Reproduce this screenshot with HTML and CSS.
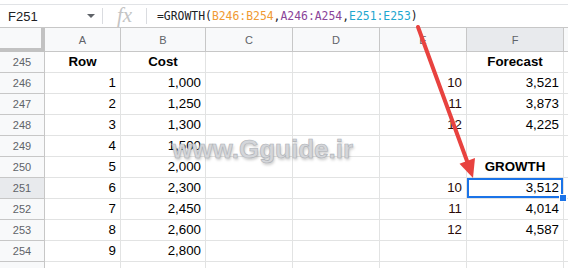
FILE: index.html
```html
<!DOCTYPE html>
<html lang="en">
<head>
    <meta charset="UTF-8">
    <title>GROWTH - Sheet</title>
    <link rel="stylesheet" href="styles.css">
</head>
<body>

<div class="top-strip"></div>

<!-- Formula bar -->
<div class="formula-bar">
    <div class="name-box">
        <span class="cell-ref">F251</span>
        <span class="caret"></span>
    </div>
    <div class="fx-box"><span class="fx">fx</span></div>
    <div class="formula">=GROWTH(<span class="r1">B246:B254</span>,<span class="r2">A246:A254</span>,<span class="r3">E251:E253</span>)</div>
</div>

<!-- Grid -->
<div class="sheet">
    <div class="corner"></div>
    <div class="col-head">A</div>
    <div class="col-head">B</div>
    <div class="col-head">C</div>
    <div class="col-head">D</div>
    <div class="col-head">E</div>
    <div class="col-head active">F</div>
    <div class="col-head"></div>

    <div class="row-head">245</div>
    <div class="cell title">Row</div>
    <div class="cell title">Cost</div>
    <div class="cell"></div>
    <div class="cell"></div>
    <div class="cell"></div>
    <div class="cell title">Forecast</div>
    <div class="cell"></div>

    <div class="row-head">246</div>
    <div class="cell num">1</div>
    <div class="cell num">1,000</div>
    <div class="cell"></div>
    <div class="cell"></div>
    <div class="cell num dark">10</div>
    <div class="cell num">3,521</div>
    <div class="cell"></div>

    <div class="row-head">247</div>
    <div class="cell num">2</div>
    <div class="cell num">1,250</div>
    <div class="cell"></div>
    <div class="cell"></div>
    <div class="cell num dark">11</div>
    <div class="cell num">3,873</div>
    <div class="cell"></div>

    <div class="row-head">248</div>
    <div class="cell num">3</div>
    <div class="cell num">1,300</div>
    <div class="cell"></div>
    <div class="cell"></div>
    <div class="cell num dark">12</div>
    <div class="cell num">4,225</div>
    <div class="cell"></div>

    <div class="row-head">249</div>
    <div class="cell num">4</div>
    <div class="cell num">1,500</div>
    <div class="cell"></div>
    <div class="cell"></div>
    <div class="cell"></div>
    <div class="cell"></div>
    <div class="cell"></div>

    <div class="row-head">250</div>
    <div class="cell num">5</div>
    <div class="cell num">2,000</div>
    <div class="cell"></div>
    <div class="cell"></div>
    <div class="cell"></div>
    <div class="cell title">GROWTH</div>
    <div class="cell"></div>

    <div class="row-head active">251</div>
    <div class="cell num">6</div>
    <div class="cell num">2,300</div>
    <div class="cell"></div>
    <div class="cell"></div>
    <div class="cell num dark">10</div>
    <div class="cell num selected">3,512<span class="handle"></span></div>
    <div class="cell"></div>

    <div class="row-head">252</div>
    <div class="cell num">7</div>
    <div class="cell num">2,450</div>
    <div class="cell"></div>
    <div class="cell"></div>
    <div class="cell num dark">11</div>
    <div class="cell num">4,014</div>
    <div class="cell"></div>

    <div class="row-head">253</div>
    <div class="cell num">8</div>
    <div class="cell num">2,600</div>
    <div class="cell"></div>
    <div class="cell"></div>
    <div class="cell num dark">12</div>
    <div class="cell num">4,587</div>
    <div class="cell"></div>

    <div class="row-head">254</div>
    <div class="cell num">9</div>
    <div class="cell num">2,800</div>
    <div class="cell"></div>
    <div class="cell"></div>
    <div class="cell"></div>
    <div class="cell"></div>
    <div class="cell"></div>

    <div class="row-head stub"></div>
    <div class="cell stub"></div>
    <div class="cell stub"></div>
    <div class="cell stub"></div>
    <div class="cell stub"></div>
    <div class="cell stub"></div>
    <div class="cell stub"></div>
    <div class="cell stub"></div>
</div>

<!-- Watermark -->
<div class="watermark">www.Gguide.ir</div>

<!-- Annotation arrow -->
<svg class="arrow" width="568" height="268" viewBox="0 0 568 268">
    <line x1="418" y1="27" x2="467" y2="161" stroke="#e8423f" stroke-width="4" stroke-linecap="round"/>
    <polygon points="473,178 459.5,163.8 475,158" fill="#e8423f"/>
</svg>

</body>
</html>
```

FILE: styles.css
```css
body {
    margin: 0;
    width: 568px;
    height: 268px;
    overflow: hidden;
    position: relative;
    background: #fff;
    font-family: "Liberation Sans", Arial, sans-serif;
}
.top-strip {
    height: 4px;
    background: #fff;
}
.formula-bar {
    display: flex;
    align-items: center;
    height: 22px;
    border-top: 1px solid #e1e3e6;
    border-bottom: 1px solid #c7c7c7;
}
.name-box {
    width: 103px;
    display: flex;
    align-items: center;
    justify-content: space-between;
    box-sizing: border-box;
    padding: 0 7px 0 8px;
    border-right: 1px solid #dadce0;
    height: 16px;
}
.cell-ref {
    font-size: 13px;
    color: #202124;
    margin-top: 1px;
}
.caret {
    width: 0;
    height: 0;
    border-left: 4px solid transparent;
    border-right: 4px solid transparent;
    border-top: 4px solid #5f6368;
}
.fx-box {
    width: 43px;
    height: 16px;
    display: flex;
    align-items: center;
    justify-content: center;
    border-right: 1px solid #dadce0;
}
.fx {
    font-family: "Liberation Serif", serif;
    font-style: italic;
    font-size: 21px;
    color: #c4c4c4;
    line-height: 16px;
    margin-top: -2px;
}
.formula {
    padding-left: 10px;
    font-family: "DejaVu Sans Mono", monospace;
    font-size: 11.4px;
    color: #202124;
}
.r1 { color: #f09a32; }
.r2 { color: #8a4499; }
.r3 { color: #1ea7cf; }

.sheet {
    display: grid;
    grid-template-columns: 45px 76px 85px 87px 87px 87px 97px 1fr;
    grid-template-rows: 24px repeat(10, 21px) 6px;
}
.corner {
    background: #f8f9fa;
    border-right: 4px solid #c2c2c2;
    border-bottom: 4px solid #c2c2c2;
}
.col-head {
    background: #f8f9fa;
    border-right: 1px solid #c7c7c7;
    border-bottom: 1px solid #c7c7c7;
    font-size: 11px;
    color: #5f6368;
    text-align: center;
    line-height: 24px;
}
.col-head.active,
.row-head.active {
    background: #e8eaed;
}
.row-head {
    background: #f8f9fa;
    border-right: 1px solid #c7c7c7;
    border-bottom: 1px solid #c7c7c7;
    font-size: 11px;
    color: #5f6368;
    text-align: center;
    line-height: 20px;
}
.cell {
    border-right: 1px solid #e2e3e3;
    border-bottom: 1px solid #e2e3e3;
    font-size: 13.3px;
    color: #000;
    line-height: 20px;
    padding: 0 4px;
    white-space: nowrap;
    position: relative;
}
.stub {
    border-bottom: none;
}
.title {
    font-weight: bold;
    text-align: center;
}
.num {
    text-align: right;
}
.dark {
    color: #2a0a08;
}
.selected {
    box-shadow: inset 0 0 0 2px #1a73e8;
}
.handle {
    position: absolute;
    right: -4px;
    bottom: -4px;
    width: 6px;
    height: 6px;
    background: #1a73e8;
    border: 1px solid #fff;
    z-index: 2;
}

.watermark {
    position: absolute;
    left: 172px;
    top: 134px;
    font-size: 26px;
    line-height: 30px;
    font-weight: bold;
    color: #d4d6da;
    -webkit-text-stroke: 0.6px #aeb1b6;
    text-shadow: 1px 2px 3px rgba(0, 0, 0, 0.22);
}
.arrow {
    position: absolute;
    left: 0;
    top: 0;
}
```
